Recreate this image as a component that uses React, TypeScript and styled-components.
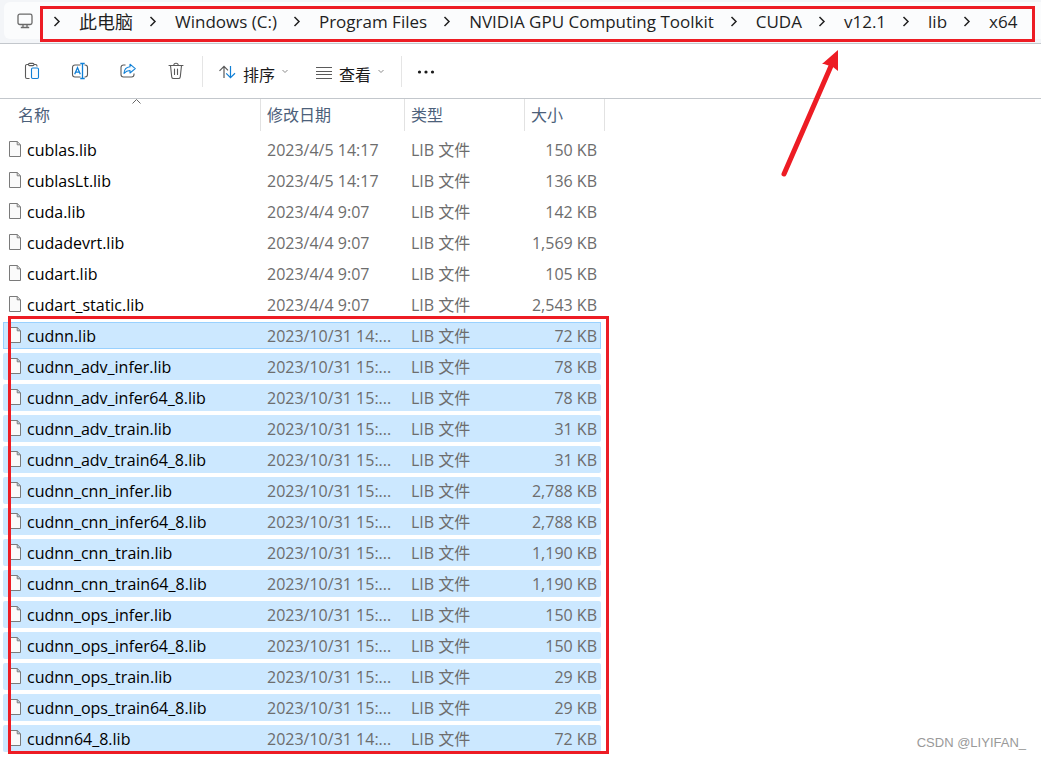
import React from "react";
import styled, { createGlobalStyle, css } from "styled-components";

const uiFont = `"Open Sans", "Noto Sans CJK SC", sans-serif`;
const red = "#ed1c24";

const GlobalStyle = createGlobalStyle`
  *, *::before, *::after { box-sizing: border-box; }
  body { margin: 0; background: #fff; color: #1a1a1a; font: 16px/24px ${uiFont}; }
  button { font: inherit; color: inherit; }
`;

const Window = styled.div`
  position: relative;
  min-height: 100vh;
  overflow: hidden;
`;

const AddressArea = styled.header`
  position: relative;
  height: 44px;
  padding: 2px 0 4px 4px;
  background: #f3f5f8;
  border-bottom: 1px solid #c3c7cc;
`;

const AddressBar = styled.nav`
  display: flex;
  align-items: center;
  height: 37px;
  padding-left: 13px;
  background: #fbfcfd;
  border-radius: 6px 0 0 6px;
`;

const Crumbs = styled.ol`
  display: flex;
  align-items: center;
  margin: 0;
  padding: 2px 0 0 4px;
  list-style: none;
`;

const Crumb = styled.li`
  display: flex;
  align-items: center;
  white-space: nowrap;
`;

const CrumbSeparator = styled.svg`
  flex: none;
  width: 12px;
  height: 12px;
  margin: 0 16px 0 14px;
`;

const CrumbLink = styled.a<{ $root: boolean }>`
  color: #1f1f1f;
  font-size: ${(p) => (p.$root ? 18 : 17)}px;
  text-decoration: none;
`;

const Toolbar = styled.div`
  display: flex;
  align-items: center;
  height: 55px;
  border-bottom: 1px solid #c3c7cc;
  padding-left: 8px;
`;

const IconButton = styled.button`
  display: flex;
  align-items: center;
  justify-content: center;
  width: 48px;
  height: 40px;
  padding: 0;
  border: 0;
  background: none;
`;

const MenuButton = styled.button<{ $gap: number }>`
  display: flex;
  align-items: center;
  height: 40px;
  padding: 0;
  border: 0;
  background: none;
  margin-left: ${(p) => p.$gap}px;
`;

const MenuLabel = styled.span`
  padding-top: 8px;
  margin: 0 7px;
`;

const Divider = styled.span<{ $gap: number }>`
  width: 1px;
  height: 31px;
  margin-left: ${(p) => p.$gap}px;
  background: #e5e5e5;
`;

const FileArea = styled.main`
  position: relative;
  width: 612px;
  padding-left: 3px;
`;

const FileTable = styled.table`
  table-layout: fixed;
  width: 598px;
  margin-top: -4px;
  border-collapse: separate;
  border-spacing: 0 4px;
`;

const HeadCell = styled.th<{ $first?: boolean; $last?: boolean }>`
  position: relative;
  height: 33px;
  padding: 0 0 2px ${(p) => (p.$first ? 15 : 6)}px;
  color: #4c607a;
  font-weight: 400;
  text-align: left;
  &::after {
    content: "";
    position: absolute;
    top: 0;
    right: ${(p) => (p.$last ? -4 : 0)}px;
    width: 1px;
    height: 32px;
    background: #e2e2e2;
  }
`;

const SortMark = styled.svg`
  position: absolute;
  top: 0;
  left: 129px;
  width: 9px;
  height: 5px;
`;

const FileRow = styled.tr<{ $selected: boolean; $focused: boolean }>`
  ${(p) => p.$selected && css`
    td { background: #cce8ff; }
    td:first-child { border-radius: 2px 0 0 2px; }
    td:last-child { border-radius: 0 2px 2px 0; }
  `}
  ${(p) => p.$focused && css`
    outline: 1px solid #99d1ff;
    outline-offset: -1px;
  `}
`;

const Cell = styled.td<{ $end?: boolean }>`
  height: 27px;
  padding: 2px 4px 0 6px;
  line-height: 25px;
  color: #6d6d6d;
  white-space: nowrap;
  text-align: ${(p) => (p.$end ? "right" : "left")};
`;

const NameCell = styled(Cell)`
  color: #000;
`;

const FileName = styled.span`
  display: flex;
  align-items: center;
  gap: 6px;
  svg { margin-bottom: 4px; }
`;

const MarkBox = styled.div`
  position: absolute;
  border: 3px solid ${red};
  pointer-events: none;
`;

const PathBox = styled(MarkBox)`
  top: 6px;
  left: 40px;
  right: 6px;
  height: 36px;
`;

const FilesBox = styled(MarkBox)`
  top: 221px;
  left: 8px;
  right: 3px;
  bottom: 2px;
`;

const Arrow = styled.svg`
  position: absolute;
  top: 48px;
  left: 778px;
  width: 64px;
  height: 132px;
  pointer-events: none;
`;

const Watermark = styled.span`
  position: absolute;
  right: 15px;
  bottom: 6px;
  font: 13px/20px "Liberation Sans", sans-serif;
  color: #999;
`;

const path = ["此电脑", "Windows (C:)", "Program Files", "NVIDIA GPU Computing Toolkit", "CUDA", "v12.1", "lib", "x64"];

type LibFile = [name: string, date: string, size: string, selected?: boolean];

const files: LibFile[] = [
  ["cublas.lib", "2023/4/5 14:17", "150 KB"],
  ["cublasLt.lib", "2023/4/5 14:17", "136 KB"],
  ["cuda.lib", "2023/4/4 9:07", "142 KB"],
  ["cudadevrt.lib", "2023/4/4 9:07", "1,569 KB"],
  ["cudart.lib", "2023/4/4 9:07", "105 KB"],
  ["cudart_static.lib", "2023/4/4 9:07", "2,543 KB"],
  ["cudnn.lib", "2023/10/31 14:...", "72 KB", true],
  ["cudnn_adv_infer.lib", "2023/10/31 15:...", "78 KB", true],
  ["cudnn_adv_infer64_8.lib", "2023/10/31 15:...", "78 KB", true],
  ["cudnn_adv_train.lib", "2023/10/31 15:...", "31 KB", true],
  ["cudnn_adv_train64_8.lib", "2023/10/31 15:...", "31 KB", true],
  ["cudnn_cnn_infer.lib", "2023/10/31 15:...", "2,788 KB", true],
  ["cudnn_cnn_infer64_8.lib", "2023/10/31 15:...", "2,788 KB", true],
  ["cudnn_cnn_train.lib", "2023/10/31 15:...", "1,190 KB", true],
  ["cudnn_cnn_train64_8.lib", "2023/10/31 15:...", "1,190 KB", true],
  ["cudnn_ops_infer.lib", "2023/10/31 15:...", "150 KB", true],
  ["cudnn_ops_infer64_8.lib", "2023/10/31 15:...", "150 KB", true],
  ["cudnn_ops_train.lib", "2023/10/31 15:...", "29 KB", true],
  ["cudnn_ops_train64_8.lib", "2023/10/31 15:...", "29 KB", true],
  ["cudnn64_8.lib", "2023/10/31 14:...", "72 KB", true],
];

const gray = "#5a5a5a";
const blue = "#0f7fd6";

const ComputerIcon = () => (
  <svg width="16" height="16" viewBox="0 0 16 16" fill="none" stroke="#6a6a6a" strokeWidth="1.3">
    <rect x="1" y="1.2" width="14" height="10.3" rx="1.8" />
    <path d="M6 11.5v2.6M10 11.5v2.6M3.8 14.5h8.4" />
  </svg>
);

const PasteIcon = () => (
  <svg width="16" height="18" viewBox="0 0 16 18" fill="none" stroke={gray} strokeWidth="1.1">
    <path d="M5.5 16.5H3A1.5 1.5 0 0 1 1.5 15V4A1.5 1.5 0 0 1 3 2.5h1.5M10 2.5h1.5A1.5 1.5 0 0 1 13 4v.6" />
    <rect x="4.5" y="1.4" width="5.5" height="2.2" rx="1.1" />
    <rect x="7.5" y="6" width="7" height="10.5" rx="1.2" stroke={blue} fill="#f8fcff" />
  </svg>
);

const RenameIcon = () => (
  <svg width="18" height="18" viewBox="0 0 18 18" fill="none" stroke={gray} strokeWidth="1.1">
    <path d="M9.5 15H4a2.5 2.5 0 0 1-2.5-2.5v-7A2.5 2.5 0 0 1 4 3h5.5M13.5 3h.5a2.5 2.5 0 0 1 2.5 2.5v7A2.5 2.5 0 0 1 14 15h-.5" />
    <path stroke={blue} strokeWidth="1.3" d="M3.7 12.3 6.5 5.6l2.8 6.7M4.7 10.2h3.6M9.3 1.5h4.4M9.3 16.5h4.4M11.5 1.5v15" />
  </svg>
);

const ShareIcon = () => (
  <svg width="18" height="18" viewBox="0 0 18 18" fill="none" stroke={gray} strokeWidth="1.1" strokeLinejoin="round">
    <path d="M6.5 3H4.5A2.5 2.5 0 0 0 2 5.5v7A2.5 2.5 0 0 0 4.5 15h8a2.5 2.5 0 0 0 2.5-2.5V11.5" />
    <path stroke={blue} fill="#f3faff" d="M11 2.2 16.3 6.6 11 11V8.5C8.3 8.5 6.7 9.3 5 11.3 5.2 7.5 7.3 5 11 4.7Z" />
  </svg>
);

const TrashIcon = () => (
  <svg width="16" height="18" viewBox="0 0 16 18" fill="none" stroke={gray} strokeWidth="1.1" strokeLinecap="round">
    <path d="M1 3.5h14M2.5 3.5l1.2 11.3a2 2 0 0 0 2 1.7h4.6a2 2 0 0 0 2-1.7L13.5 3.5M5.8 3.3a2.2 2 0 0 1 4.4 0M6.5 7v5.5M9.5 7v5.5" />
  </svg>
);

const SortIcon = () => (
  <svg width="18" height="18" viewBox="0 0 18 18" fill="none" strokeWidth="1.2">
    <path stroke={gray} d="M6 16V4.5M1.5 8.800 6 4.300l4 4" />
    <path stroke={blue} d="M12.5 4v11.500M8.200 11.300l4.300 4.400L17 11.300" />
  </svg>
);

const ViewIcon = () => (
  <svg width="16" height="18" viewBox="0 0 16 18" stroke={gray} strokeWidth="1">
    <path d="M0 5.500h16M0 9.500h16M0 12.500h16M0 16.500h16" />
  </svg>
);

const SmallChevron = () => (
  <svg width="6" height="10" viewBox="0 0 6 10" fill="none" stroke="#8a8a8a" strokeWidth="1">
    <path d="M.5 4 3 6.500 5.500 4" />
  </svg>
);

const MoreIcon = () => (
  <svg width="18" height="6" viewBox="0 0 18 6" fill="#1a1a1a">
    <circle cx="2.5" cy="4" r="1.6" />
    <circle cx="9" cy="4" r="1.6" />
    <circle cx="15.5" cy="4" r="1.6" />
  </svg>
);

const FileIcon = () => (
  <svg width="12" height="16" viewBox="0 0 12 16" fill="#fafafa" stroke="#7a7a7a">
    <path d="M.5.5h7.700l3.300 3.300v11.700H.5ZM8.200.5v3.300h3.300" />
  </svg>
);

export default function App() {
  return (
    <Window>
      <GlobalStyle />
      <AddressArea>
        <AddressBar aria-label="路径">
          <ComputerIcon />
          <Crumbs>
            {path.map((name, i) => (
              <Crumb key={name}>
                <CrumbSeparator viewBox="0 0 12 12" fill="none" stroke="#222" strokeWidth="1.5">
                  <path d="M3.5 1 8 5.500 3.500 10" />
                </CrumbSeparator>
                <CrumbLink href="#" $root={i === 0}>{name}</CrumbLink>
              </Crumb>
            ))}
          </Crumbs>
        </AddressBar>
        <PathBox />
      </AddressArea>

      <Toolbar role="toolbar">
        <IconButton aria-label="粘贴"><PasteIcon /></IconButton>
        <IconButton aria-label="重命名"><RenameIcon /></IconButton>
        <IconButton aria-label="共享"><ShareIcon /></IconButton>
        <IconButton aria-label="删除"><TrashIcon /></IconButton>
        <Divider $gap={2} />
        <MenuButton $gap={15}>
          <SortIcon />
          <MenuLabel>排序</MenuLabel>
          <SmallChevron />
        </MenuButton>
        <MenuButton $gap={28}>
          <ViewIcon />
          <MenuLabel>查看</MenuLabel>
          <SmallChevron />
        </MenuButton>
        <Divider $gap={17} />
        <IconButton aria-label="更多"><MoreIcon /></IconButton>
      </Toolbar>

      <FileArea>
        <FileTable>
          <colgroup>
            <col width="258" />
            <col width="144" />
            <col width="120" />
            <col width="76" />
          </colgroup>
          <thead>
            <tr>
              <HeadCell $first>
                名称
                <SortMark viewBox="0 0 9 5" fill="none" stroke="#666">
                  <path d="M.5 4.5l4-4 4 4" />
                </SortMark>
              </HeadCell>
              <HeadCell>修改日期</HeadCell>
              <HeadCell>类型</HeadCell>
              <HeadCell $last>大小</HeadCell>
            </tr>
          </thead>
          <tbody>
            {files.map(([name, date, size, selected]) => (
              <FileRow key={name} $selected={!!selected} $focused={name === "cudnn.lib"}>
                <NameCell>
                  <FileName><FileIcon />{name}</FileName>
                </NameCell>
                <Cell>{date}</Cell>
                <Cell>LIB 文件</Cell>
                <Cell $end>{size}</Cell>
              </FileRow>
            ))}
          </tbody>
        </FileTable>
        <FilesBox />
      </FileArea>

      <Arrow viewBox="0 0 64 132" fill={red}>
        <path d="M6 126 53 18" stroke={red} strokeWidth="5" strokeLinecap="round" />
        <path d="M60 2V23l-5-4-9-3-2 0Z" />
      </Arrow>
      <Watermark>CSDN @LIYIFAN_</Watermark>
    </Window>
  );
}
